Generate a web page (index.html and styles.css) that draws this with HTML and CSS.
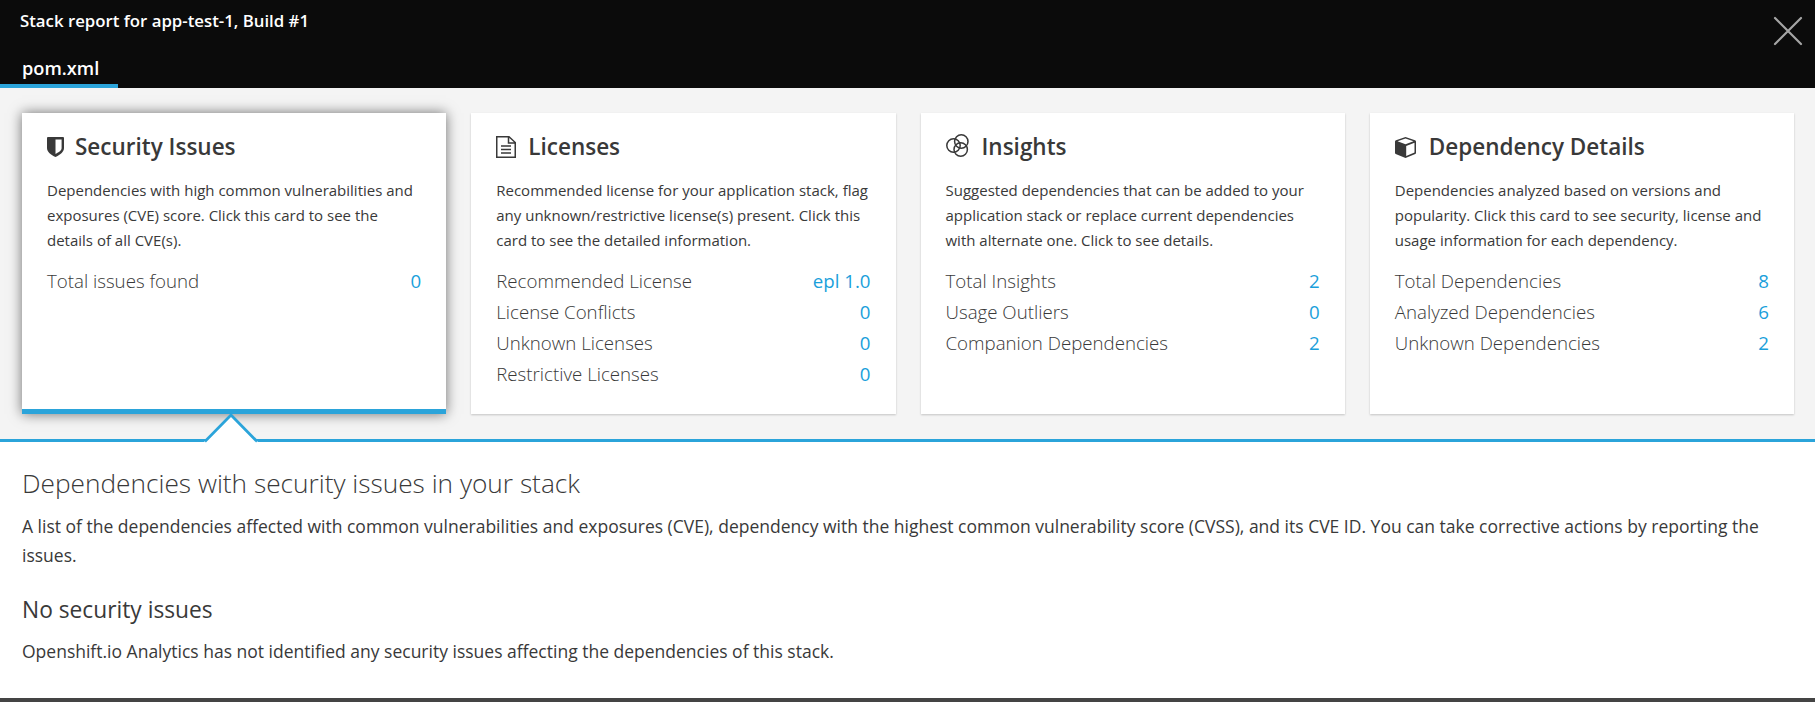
FILE: index.html
```html
<!DOCTYPE html>
<html lang="en">
<head>
<meta charset="utf-8">
<title>Stack report</title>
<link rel="stylesheet" href="styles.css">
</head>
<body>
<div class="modal">
  <header class="header">
    <div class="header-top">
      <h1 class="title">Stack report for app-test-1, Build #1</h1>
      <button class="close" aria-label="Close">
        <svg width="30" height="30" viewBox="0 0 30 30" fill="none" stroke="#a5a5a5" stroke-width="2.200" stroke-linecap="round"><path d="M2 2 28 28M28 2 2 28"/></svg>
      </button>
    </div>
    <nav class="tabs"><a class="tab">pom.xml</a></nav>
  </header>
  <section class="cards">
    <article class="card card-active">
      <h2 class="card-title">
        <svg class="icon-shield" width="17" height="20" viewBox="0 0 17 20"><path fill="#393939" fill-rule="evenodd" d="M0 1Q0 0 1 0H16Q17 0 17 1V11C17 15 13 18 8.5 20C4 18 0 15 0 11ZM8.5 2.5V17C12 15 14.6 13.500 14.600 11V2.500Z"/></svg>
        <span>Security Issues</span>
      </h2>
      <p class="card-text">Dependencies with high common vulnerabilities and exposures (CVE) score. Click this card to see the details of all CVE(s).</p>
      <dl class="stats">
        <div class="stat"><dt>Total issues found</dt><dd>0</dd></div>
      </dl>
    </article>
    <article class="card">
      <h2 class="card-title">
        <svg class="icon-file" width="20" height="22" viewBox="0 0 20 22" fill="none" stroke="#393939" stroke-width="1.500"><path d="M.75.75H13L19.250 6.500V21.250H.75ZM12.500.75V7H19M5 10H15M5 13.500H15M5 17H15"/></svg>
        <span>Licenses</span>
      </h2>
      <p class="card-text">Recommended license for your application stack, flag any unknown/restrictive license(s) present. Click this card to see the detailed information.</p>
      <dl class="stats">
        <div class="stat"><dt>Recommended License</dt><dd>epl 1.0</dd></div>
        <div class="stat"><dt>License Conflicts</dt><dd>0</dd></div>
        <div class="stat"><dt>Unknown Licenses</dt><dd>0</dd></div>
        <div class="stat"><dt>Restrictive Licenses</dt><dd>0</dd></div>
      </dl>
    </article>
    <article class="card">
      <h2 class="card-title">
        <svg class="icon-rings" width="23" height="23" viewBox="0 0 23 23" fill="none" stroke="#393939" stroke-width="1.500"><circle cx="7.500" cy="11.500" r="6.700"/><circle cx="15.300" cy="7.500" r="6.700"/><circle cx="14.700" cy="15.500" r="6.700"/></svg>
        <span>Insights</span>
      </h2>
      <p class="card-text">Suggested dependencies that can be added to your application stack or replace current dependencies with alternate one. Click to see details.</p>
      <dl class="stats">
        <div class="stat"><dt>Total Insights</dt><dd>2</dd></div>
        <div class="stat"><dt>Usage Outliers</dt><dd>0</dd></div>
        <div class="stat"><dt>Companion Dependencies</dt><dd>2</dd></div>
      </dl>
    </article>
    <article class="card">
      <h2 class="card-title">
        <svg class="icon-cube" width="21" height="21" viewBox="0 0 21 21"><path fill="#393939" fill-rule="evenodd" d="M10.500 0 20 3.200Q21 3.600 21 4.500V16Q21 16.700 20.300 17L10.500 21 .7 17Q0 16.700 0 16V4.500Q0 3.600 1 3.200ZM10.500 1.500 2.500 4.300 10.500 7.300 18.500 4.300ZM11.200 9V19L19.500 15.500V5.800Z"/></svg>
        <span>Dependency Details</span>
      </h2>
      <p class="card-text">Dependencies analyzed based on versions and popularity. Click this card to see security, license and usage information for each dependency.</p>
      <dl class="stats">
        <div class="stat"><dt>Total Dependencies</dt><dd>8</dd></div>
        <div class="stat"><dt>Analyzed Dependencies</dt><dd>6</dd></div>
        <div class="stat"><dt>Unknown Dependencies</dt><dd>2</dd></div>
      </dl>
    </article>
  </section>
  <section class="details">
    <svg class="pointer" width="54" height="31" viewBox="0 0 54 31"><path fill="#fff" d="M0 31V29L27 2 54 29V31Z"/><path fill="none" stroke="#2ba4da" stroke-width="2.800" d="M.9 28.500 27 2 53.100 28.500"/></svg>
    <h2 class="details-title">Dependencies with security issues in your stack</h2>
    <p class="details-text">A list of the dependencies affected with common vulnerabilities and exposures (CVE), dependency with the highest common vulnerability score (CVSS), and its CVE ID. You can take corrective actions by reporting the issues.</p>
    <h3 class="details-subtitle">No security issues</h3>
    <p class="details-text">Openshift.io Analytics has not identified any security issues affecting the dependencies of this stack.</p>
  </section>
</div>
</body>
</html>
```
FILE: styles.css
```css
* { box-sizing: border-box; margin: 0; padding: 0; }
body {
  height: 702px;
  overflow: hidden;
  background: #444;
  color: #393939;
  font-family: "Open Sans", sans-serif;
}
.modal { height: 698px; display: flex; flex-direction: column; background: #fff; }
.header {
  height: 88px;
  display: flex;
  flex-direction: column;
  justify-content: space-between;
  background: #0b0b0b;
  color: #fff;
}
.header-top { display: flex; justify-content: space-between; padding: 7px 10px 0 20px; height: 46px; }
.title { font-size: 16.8px; font-weight: 600; line-height: 28px; }
.close { background: none; border: 0; width: 32px; height: 39px; padding: 9px 0 0; }
.close svg { display: block; }
.tabs { display: flex; height: 42px; }
.tab {
  width: 118px;
  height: 43px;
  flex: none;
  padding: 7px 0 0 22px;
  border-bottom: 5px solid #2ba4da;
  font-size: 18.2px;
  font-weight: 600;
  line-height: 31px;
}
.cards {
  height: 351px;
  padding: 25px 21px 25px 22px;
  display: grid;
  grid-template-columns: repeat(4, minmax(0, 1fr));
  gap: 25px;
  background: #f4f4f4;
}
.card { padding: 20px 25px 0; background: #fff; box-shadow: 0 1px 2px rgba(0, 0, 0, .2); }
.card-active { border-bottom: 5px solid #2ba4da; box-shadow: 0 0 12px rgba(0, 0, 0, .55); }
.card-title { display: flex; align-items: center; height: 28px; font-size: 22.5px; font-weight: 600; line-height: 28px; }
.card-title svg { flex: none; }
.icon-shield { margin-right: 11px; }
.icon-file { margin-right: 12px; }
.icon-rings { margin-right: 13px; margin-bottom: 3px; }
.icon-cube { margin-right: 13px; }
.card-text { margin-top: 17px; font-size: 15px; line-height: 25px; }
.stats { margin-top: 12px; }
.stat { display: flex; justify-content: space-between; height: 31px; font-size: 18.7px; line-height: 31px; font-weight: 300; }
.stat dd { color: #1a9fdb; font-weight: 400; }
.details { position: relative; flex: 1; border-top: 3px solid #2ba4da; padding: 23px 22px 0; }
.pointer { position: absolute; left: 204px; top: -29px; }
.details-title { font-size: 26.25px; font-weight: 300; line-height: 37px; padding-bottom: 1px; }
.details-text { margin-top: 9px; font-size: 17.5px; line-height: 29px; }
.details-subtitle { margin-top: 24px; font-size: 22.75px; font-weight: 400; line-height: 32px; }
.details-subtitle + .details-text { margin-top: 11px; }
```
